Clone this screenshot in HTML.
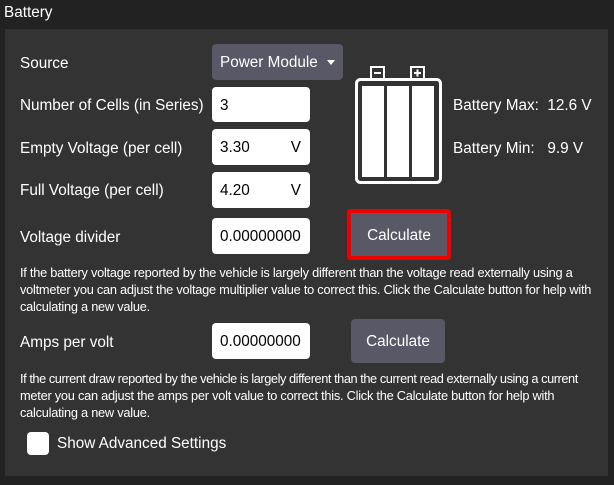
<!DOCTYPE html>
<html><head><style>
*{margin:0;padding:0;box-sizing:border-box}
body{width:614px;height:485px;background:#222;font-family:"Liberation Sans",sans-serif;color:#fff;position:relative;overflow:hidden}
.a{position:absolute;white-space:nowrap}
.lbl{font-size:15.3px}
.panel{position:absolute;left:5px;top:29px;width:603px;height:447px;background:#333}
.in{position:absolute;background:#fff;border-radius:4px;color:#000;font-size:15.3px;padding-left:8px;line-height:37px;height:36px;width:98px;left:212px}
.btn{position:absolute;background:#585866;border-radius:4px;font-size:15.3px;text-align:center;color:#fff}
.sm{font-size:12.8px;line-height:17px;letter-spacing:-0.25px;left:20px}
</style></head><body>
<div class="a" style="left:4px;top:4px;font-size:15.3px">Battery</div>
<div class="panel"></div>
<div class="a lbl" style="left:20px;top:55px">Source</div>
<div class="btn" style="left:212px;top:44px;width:131px;height:36px;line-height:37px;text-align:left;padding-left:8px">Power Module<span style="position:absolute;right:8px;top:16px;border-left:4px solid transparent;border-right:4px solid transparent;border-top:5px solid #fff"></span></div>
<div class="a lbl" style="left:20px;top:97px">Number of Cells (in Series)</div>
<div class="in" style="top:87px;height:35px">3</div>
<div class="a lbl" style="left:20px;top:140px">Empty Voltage (per cell)</div>
<div class="in" style="top:129px">3.30<span style="position:absolute;right:9px">V</span></div>
<div class="a lbl" style="left:20px;top:182px">Full Voltage (per cell)</div>
<div class="in" style="top:172px">4.20<span style="position:absolute;right:9px">V</span></div>
<div class="a lbl" style="left:20px;top:229px">Voltage divider</div>
<div class="in" style="top:218px">0.00000000</div>
<div class="btn" style="left:347px;top:209px;width:104px;height:51px;border:4px solid #e00;border-radius:3px;line-height:45px;background:#585866">Calculate</div>
<div class="a sm" style="top:264px">If the battery voltage reported by the vehicle is largely different than the voltage read externally using a<br>voltmeter you can adjust the voltage multiplier value to correct this. Click the Calculate button for help with<br>calculating a new value.</div>
<div class="a lbl" style="left:20px;top:334px">Amps per volt</div>
<div class="in" style="top:323px">0.00000000</div>
<div class="btn" style="left:351px;top:319px;width:94px;height:44px;line-height:45px">Calculate</div>
<div class="a sm" style="top:370px"><span style="letter-spacing:-0.45px">If the current draw reported by the vehicle is largely different than the current read externally using a current</span><br>meter you can adjust the amps per volt value to correct this. Click the Calculate button for help with<br>calculating a new value.</div>
<div class="a" style="left:27px;top:432px;width:22px;height:23px;background:#fff;border-radius:4px"></div>
<div class="a lbl" style="left:57px;top:435px">Show Advanced Settings</div>
<svg class="a" style="left:355px;top:65px" width="88" height="120" viewBox="0 0 88 120">
<rect x="16" y="2" width="13" height="12" fill="none" stroke="#fff" stroke-width="2"/>
<rect x="56" y="2" width="13" height="12" fill="none" stroke="#fff" stroke-width="2"/>
<rect x="19" y="7" width="7" height="2" fill="#fff"/>
<rect x="59" y="7" width="7" height="2" fill="#fff"/><rect x="61.5" y="4.5" width="2" height="7" fill="#fff"/>
<rect x="1.5" y="14.5" width="84" height="103" rx="4" fill="none" stroke="#fff" stroke-width="3"/>
<rect x="7" y="21" width="22" height="91" fill="#fff"/>
<rect x="32" y="21" width="22" height="91" fill="#fff"/>
<rect x="57" y="21" width="22" height="91" fill="#fff"/>
</svg>
<div class="a lbl" style="left:453px;top:97px">Battery Max:&nbsp; 12.6 V</div>
<div class="a lbl" style="left:453px;top:140px">Battery Min:&nbsp;&nbsp; 9.9 V</div>
</body></html>
